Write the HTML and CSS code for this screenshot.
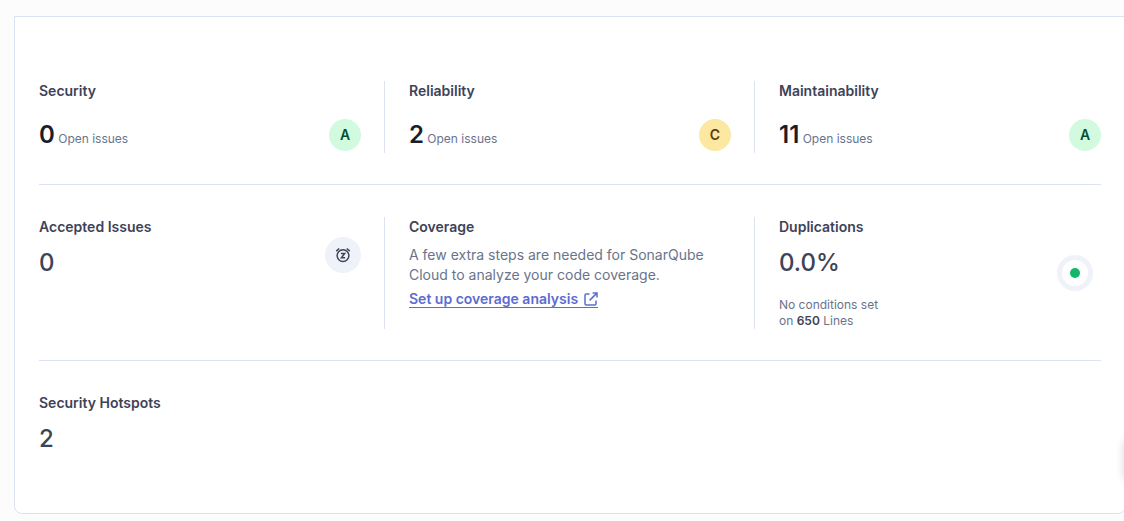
FILE: index.html
```html
<!DOCTYPE html>
<html lang="en">
<head>
<meta charset="utf-8">
<meta name="viewport" content="width=device-width, initial-scale=1">
<title>Project overview</title>
<link rel="stylesheet" href="styles.css">
</head>
<body>
<main class="card">
  <section class="row">
    <article class="cell">
      <h2 class="title">Security</h2>
      <div class="measure">
        <p class="issues"><span class="count">0</span> Open issues</p>
        <span class="rating rating-a">A</span>
      </div>
    </article>
    <article class="cell">
      <h2 class="title">Reliability</h2>
      <div class="measure">
        <p class="issues"><span class="count">2</span> Open issues</p>
        <span class="rating rating-c">C</span>
      </div>
    </article>
    <article class="cell">
      <h2 class="title">Maintainability</h2>
      <div class="measure">
        <p class="issues"><span class="count">11</span> Open issues</p>
        <span class="rating rating-a">A</span>
      </div>
    </article>
  </section>
  <section class="row">
    <article class="cell split">
      <div>
        <h2 class="title">Accepted Issues</h2>
        <p class="value">0</p>
      </div>
      <span class="snooze">
        <svg width="16" height="16" viewBox="0 0 16 16" fill="none" stroke="currentColor" stroke-width="1.5" aria-hidden="true">
          <circle cx="8" cy="8.6" r="5.9"/>
          <path d="M1.2 4.1 4.3 1.5M14.8 4.1 11.7 1.5"/>
          <path d="M5.9 6.4h3.8L6.4 10.8H10.1"/>
        </svg>
      </span>
    </article>
    <article class="cell">
      <h2 class="title">Coverage</h2>
      <p class="text">A few extra steps are needed for SonarQube Cloud to analyze your code coverage.</p>
      <a class="link" href="#coverage">Set up coverage analysis
        <svg width="14" height="14" viewBox="0 0 14 14" fill="none" stroke="currentColor" stroke-width="1.5" aria-hidden="true">
          <path d="M5.5 2H2.2Q1 2 1 3.2v8.6Q1 13 2.2 13h8.6q1.2 0 1.2-1.2V8.5"/>
          <path d="M5.6 8.4 12.4 1.6M8.6 1H13v4.4"/>
        </svg></a>
    </article>
    <article class="cell split">
      <div>
        <h2 class="title">Duplications</h2>
        <p class="value">0.0%</p>
        <p class="note">No conditions set<br>on <strong>650</strong> Lines</p>
      </div>
      <span class="donut"></span>
    </article>
  </section>
  <section class="row">
    <article class="cell">
      <h2 class="title">Security Hotspots</h2>
      <p class="value">2</p>
    </article>
  </section>
</main>
<div class="side-tab"></div>
</body>
</html>
```
FILE: styles.css
```css
body {
  margin: 0;
  padding: 16px 0 7px 14px;
  background: #fcfcfd;
  color: #3e4357;
  font-family: Inter, sans-serif;
  font-size: 14px;
  line-height: 20px;
  overflow-x: hidden;
}

h2, p {
  margin: 0;
}

.card {
  margin-right: -2px;
  padding: 32px 24px;
  background: #fff;
  border: 1px solid #dde2f2;
  border-radius: 0 0 8px 8px;
}

.row {
  display: flex;
  gap: 23px;
  padding: 32px 0 31px;
  border-bottom: 1px solid #dde2f2;
}

.row:last-child {
  padding-bottom: 24px;
  border-bottom: 0;
}

.cell {
  flex: 1 1 0;
  min-width: 0;
}

.cell + .cell {
  padding-left: 24px;
  border-left: 1px solid #dde2f2;
}

.split {
  display: flex;
  justify-content: space-between;
}

.title {
  font-size: 14px;
  font-weight: 600;
}

.measure {
  display: flex;
  align-items: center;
  justify-content: space-between;
  margin-top: 16px;
}

.issues {
  color: #69748c;
  font-size: 12px;
  line-height: 16px;
}

.count {
  color: #1b1d2b;
  font-size: 24px;
  font-weight: 600;
  line-height: 36px;
}

.rating {
  width: 32px;
  border-radius: 50%;
  font-weight: 600;
  line-height: 32px;
  text-align: center;
}

.rating-a {
  background: #d1fadf;
  color: #054f31;
}

.rating-c {
  background: #fce8a0;
  color: #663a08;
}

.value {
  margin-top: 8px;
  font-size: 24px;
  font-weight: 500;
  line-height: 36px;
}

.snooze {
  display: grid;
  place-items: center;
  width: 36px;
  height: 36px;
  margin-top: 20px;
  border-radius: 50%;
  background: #eff2f9;
}

.text {
  margin-top: 8px;
  color: #69748c;
}

.link {
  display: inline-flex;
  align-items: center;
  gap: 6px;
  margin-top: 6px;
  border-bottom: 1px solid #5d6cd0;
  color: #5d6cd0;
  font-weight: 600;
  line-height: 16px;
  text-decoration: none;
}

.note {
  margin-top: 16px;
  color: #69748c;
  font-size: 12px;
  line-height: 16px;
}

.note strong {
  color: #3e4357;
  font-weight: 600;
}

.donut {
  display: grid;
  place-items: center;
  box-sizing: border-box;
  width: 36px;
  height: 36px;
  margin: 38px 8px 0 0;
  border: 5px solid #eff2f9;
  border-radius: 50%;
}

.donut::before {
  content: "";
  width: 10px;
  height: 10px;
  border-radius: 50%;
  background: #12b76a;
}

.side-tab {
  position: fixed;
  top: 440px;
  right: -41px;
  width: 40px;
  height: 40px;
  border-radius: 4px;
  box-shadow: 0 0 10px rgba(0, 0, 0, 0.2);
}
```
